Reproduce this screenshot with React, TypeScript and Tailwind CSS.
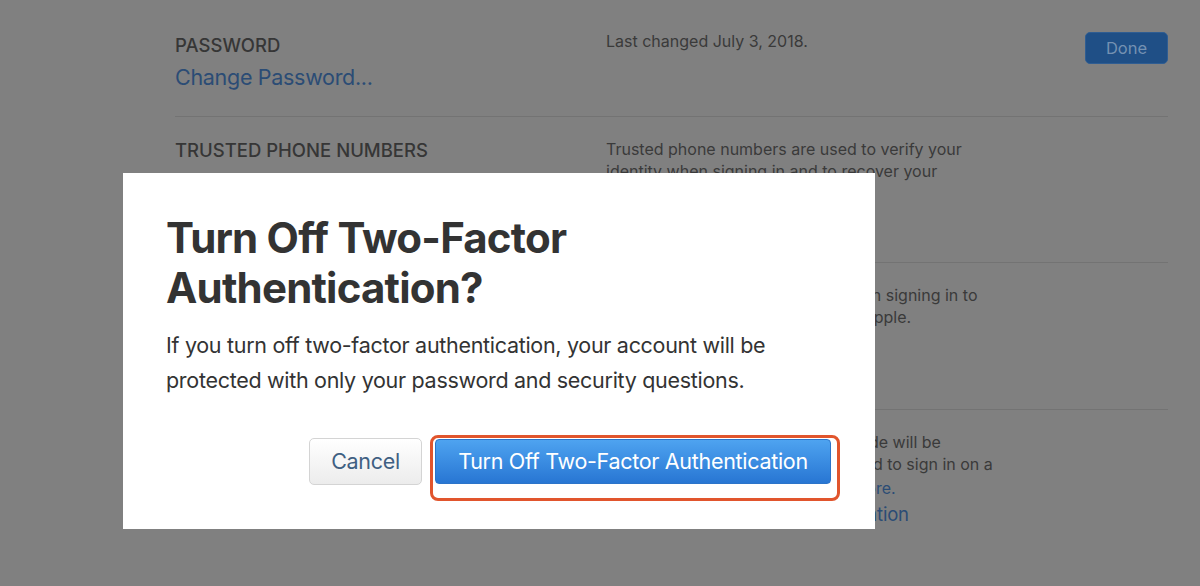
import React from 'react'

const font = { fontFamily: 'Inter, "Noto Sans", "Liberation Sans", sans-serif' }

function Row({
  label,
  children,
  right,
  className = '',
}: {
  label: React.ReactNode
  children: React.ReactNode
  right?: React.ReactNode
  className?: string
}) {
  return (
    <div className={`flex border-b border-[#737373] ${className}`}>
      <div className="w-[431px] shrink-0">{label}</div>
      <div className="flex-1 text-[16px] leading-[22px] text-[#3a3a3a]">{children}</div>
      {right}
    </div>
  )
}

export default function App() {
  return (
    <div className="relative h-[586px] w-[1200px] overflow-hidden bg-[#808080]" style={font}>
      {/* dimmed page behind the sheet */}
      <div className="pl-[175px] pr-[32px]">
        <Row
          className="h-[117px] pt-[33px]"
          label={
            <>
              <div className="text-[18.5px] leading-[24px] font-medium text-[#363636]">PASSWORD</div>
              <div className="mt-[6px] text-[21.5px] leading-[28px] tracking-[-0.3px] text-[#2b4c75]">
                Change Password...
              </div>
            </>
          }
          right={
            <button className="-mt-[1px] h-[32px] w-[83px] self-start rounded-[5px] border border-[#2f5d92] bg-[#1f4f86] text-[16.5px] text-[#7491b2]">
              Done
            </button>
          }
        >
          <div className="-mt-[3px]">Last changed July 3, 2018.</div>
        </Row>

        <Row
          className="h-[146px] pt-[21px]"
          label={
            <>
              <div className="text-[18.5px] leading-[24px] font-medium text-[#363636]">TRUSTED PHONE NUMBERS</div>
              <div className="mt-[8px] text-[17px] leading-[24px] text-[#3a3a3a]">+1 (•••) •••-••42</div>
              <div className="mt-[4px] text-[17px] leading-[24px] text-[#2b4c75]">Edit</div>
            </>
          }
        >
          <div>
            Trusted phone numbers are used to verify your
            <br />
            identity when signing in and to recover your
            <br />
            account if you forget it.
          </div>
        </Row>

        <Row
          className="h-[147px] pt-[21px]"
          label={
            <>
              <div className="text-[18.5px] leading-[24px] font-medium text-[#363636]">TRUSTED DEVICES</div>
              <div className="mt-[8px] text-[17px] leading-[24px] text-[#3a3a3a]">iPhone</div>
            </>
          }
        >
          <div>
            Devices are used to verify you when signing in to
            <br />
            your Apple ID on any device from Apple.
          </div>
        </Row>

        <div className="flex pt-[21px]">
          <div className="w-[431px] shrink-0">
            <div className="text-[18.5px] leading-[24px] font-medium text-[#363636]">TWO-FACTOR AUTHENTICATION</div>
            <div className="mt-[8px] text-[17px] leading-[24px] text-[#3a3a3a]">On</div>
          </div>
          <div className="flex-1 text-[16px] leading-[22px] text-[#3a3a3a]">
            <div>
              When on, a six-digit verification code will be
              <br />
              sent to your trusted device and used to sign in on a
            </div>
            <div className="mt-[2px]">
              new devices or browsers. <span className="text-[#2b4c75]">Learn more.</span>
            </div>
            <div className="mt-[2px] text-[18.5px] leading-[26px] tracking-[-0.2px] text-[#2b4c75]">
              Turn Off Two-Factor Authentication
            </div>
          </div>
        </div>
      </div>

      {/* confirmation sheet */}
      <div className="absolute left-[123px] top-[173px] h-[356px] w-[752px] bg-white px-[43px] pt-[40px]">
        <h1 className="text-[42px] leading-[50px] font-bold tracking-[-0.8px] text-[#333]">
          Turn Off Two-Factor
          <br />
          Authentication?
        </h1>
        <p className="mt-[15px] text-[21.5px] leading-[35px] tracking-[-0.3px] text-[#333]">
          If you turn off two-factor authentication, your account will be
          <br />
          protected with only your password and security questions.
        </p>
        <div className="mt-[40px] flex justify-end gap-[13px] pr-[1px]">
          <button className="h-[47px] w-[113px] rounded-[5px] border border-[#d4d4d4] bg-gradient-to-b from-white to-[#ececec] text-[21.5px] tracking-[-0.3px] text-[#3f5f82]">
            Cancel
          </button>
          <div className="relative">
            <button className="mt-[1px] h-[45px] w-[396px] rounded-[4px] border border-[#2c74c9] bg-gradient-to-b from-[#4ea3f0] to-[#2876d3] text-[21.5px] tracking-[-0.3px] text-white">
              Turn Off Two-Factor Authentication
            </button>
            <div className="pointer-events-none absolute -left-[5px] -right-[9px] -top-[3px] -bottom-[16px] rounded-[8px] border-[3px] border-[#e1552d]" />
          </div>
        </div>
      </div>
    </div>
  )
}
